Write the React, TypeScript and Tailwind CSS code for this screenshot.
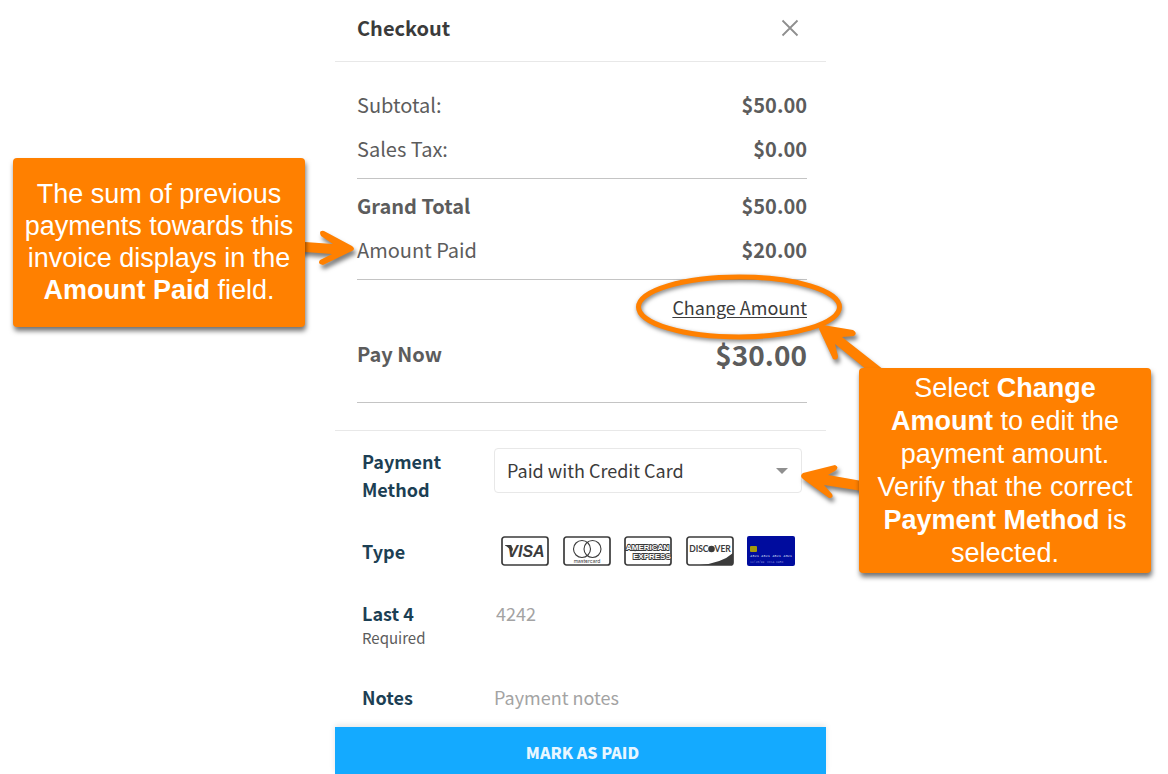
import type { ReactNode } from "react";

const totals = [
  { label: "Subtotal:", amount: "$50.00" },
  { label: "Sales Tax:", amount: "$0.00" },
];

const CardFrame = ({ children }: { children: ReactNode }) => (
  <svg viewBox="0 0 48 30" className="block h-[30px] w-12" aria-hidden="true">
    <rect x="1" y="1" width="46" height="28" rx="2.5" fill="#fff" stroke="#3b3b3b" strokeWidth="1.7" />
    {children}
  </svg>
);

const VisaIcon = () => (
  <CardFrame>
    <path d="M4 9h6l2 4-1 3C9 13 7 11 4 9.600Z" fill="#3b3b3b" />
    <text x="25" y="20.500" textAnchor="middle" fontFamily="Liberation Sans" fontSize="16" fontWeight="700" fontStyle="italic" fill="#3b3b3b">
      VISA
    </text>
  </CardFrame>
);

const MastercardIcon = () => (
  <CardFrame>
    <g fill="none" stroke="#3b3b3b" strokeWidth="1.100">
      <circle cx="19" cy="13" r="8.500" />
      <circle cx="29.500" cy="13" r="8.500" />
    </g>
    <text x="24" y="26.500" textAnchor="middle" fontFamily="Inter" fontSize="5" fill="#3b3b3b">
      mastercard
    </text>
  </CardFrame>
);

const AmexIcon = () => (
  <CardFrame>
    <g fontFamily="Liberation Sans" fontSize="8" fontWeight="700" fill="#fff" stroke="#3b3b3b" strokeWidth="1.800" paintOrder="stroke">
      <text x="2" y="14">AMERICAN</text>
      <text x="9" y="22.500">EXPRESS</text>
    </g>
  </CardFrame>
);

const DiscoverIcon = () => (
  <CardFrame>
    <path d="M14 29Q36 27 47 17V27Q47 29 45 29Z" fill="#3b3b3b" />
    <g fontFamily="Lato" fontSize="8.500" fontWeight="700" fill="#3b3b3b">
      <text x="22.500" y="16" textAnchor="end">DISC</text>
      <text x="28.500" y="16">VER</text>
    </g>
    <circle cx="25.500" cy="13" r="3.300" fill="#3b3b3b" />
  </CardFrame>
);

const OtherCardIcon = () => (
  <svg viewBox="0 0 48 30" className="block h-[30px] w-12" aria-hidden="true">
    <rect width="48" height="30" rx="2" fill="#000c9e" />
    <rect x="3" y="10" width="7" height="6" rx="1" fill="#a59a0c" />
    <g fontFamily="Liberation Mono" fill="#dfe1f7">
      <text x="3" y="21" fontSize="3.700">4321 4321 4321 4321</text>
      <text x="3" y="27" fontSize="3" fill="#7d83d3">12/20/99</text>
      <text x="20" y="27" fontSize="3" fill="#7d83d3">VISA CARD</text>
    </g>
  </svg>
);

const cardTypes = [
  { name: "Visa", icon: <VisaIcon /> },
  { name: "Mastercard", icon: <MastercardIcon /> },
  { name: "American Express", icon: <AmexIcon /> },
  { name: "Discover", icon: <DiscoverIcon /> },
  { name: "Other card", icon: <OtherCardIcon /> },
];

const TotalRow = ({ label, amount, bold = false }: { label: string; amount: string; bold?: boolean }) => (
  <div className="flex h-11 items-center justify-between pb-0.5 text-[20px]">
    <span className={bold ? "font-bold" : ""}>{label}</span>
    <span className="font-bold">{amount}</span>
  </div>
);

const Checkout = () => {
  return (
    <section className="min-w-0 font-['Noto_Sans_CJK_SC',sans-serif] text-[#5c5c5c]">
      <header className="flex h-[62px] items-center justify-between border-b border-[#e8e8e8] pb-1.5 pl-[22px] pr-[27px]">
        <h1 className="text-[20px] font-bold text-[#3b3b3b]">Checkout</h1>
        <button type="button" aria-label="Close">
          <svg viewBox="0 0 18 18" className="block h-[18px] w-[18px]" fill="none" stroke="#8f8f8f" strokeWidth="1.800">
            <path d="M1.500 1.500l15 15M16.500 1.500l-15 15" />
          </svg>
        </button>
      </header>

      <div className="pb-[27px] pl-[22px] pr-[19px] pt-[22px]">
        <div className="border-b border-[#c4c4c4] pb-1.5">
          {totals.map((item) => (
            <TotalRow key={item.label} label={item.label} amount={item.amount} />
          ))}
        </div>
        <div className="border-b border-[#c4c4c4] py-1.5">
          <TotalRow label="Grand Total" amount="$50.00" bold />
          <TotalRow label="Amount Paid" amount="$20.00" />
        </div>
        <div className="border-b border-[#c4c4c4] pb-[22px] pt-1.5">
          <div className="flex h-11 items-center justify-end pb-0.5">
            <div className="relative">
              <a href="#change" className="text-[18px] text-[#3b3b3b] underline underline-offset-2">
                Change Amount
              </a>
              <svg
                viewBox="0 0 210 70"
                className="pointer-events-none absolute left-1/2 top-1/2 h-[70px] w-[210px] -translate-x-1/2 -translate-y-1/2 overflow-visible drop-shadow-[1px_2px_2px_rgba(0,0,0,0.5)]"
                fill="none"
                stroke="#ff8000"
                strokeWidth="5"
                aria-hidden="true"
              >
                <ellipse cx="104" cy="35" rx="100.500" ry="30" />
              </svg>
            </div>
          </div>
          <div className="flex h-[50px] items-center justify-between pb-0.5 font-bold">
            <span className="text-[20px]">Pay Now</span>
            <span className="text-[28px]">$30.00</span>
          </div>
        </div>
      </div>

      <form className="border-t border-[#e8e8e8]" onSubmit={(e) => e.preventDefault()}>
        <div className="flex flex-col gap-[34px] pb-4 pl-[27px] pr-6 pt-4 text-[18px] leading-7">
          <div className="flex">
            <label htmlFor="method" className="w-[132px] shrink-0 pr-8 font-bold text-[#1c3f54]">
              Payment Method
            </label>
            <div className="relative mt-px h-[45px] flex-1">
              <select
                id="method"
                className="h-full w-full appearance-none rounded border border-[#e8e8e8] bg-white px-3 pb-0.5 text-[#3b3b3b]"
              >
                <option>Paid with Credit Card</option>
              </select>
              <svg viewBox="0 0 12 6" className="pointer-events-none absolute right-3.5 top-5 h-1.5 w-3" fill="#8f8f8f" aria-hidden="true">
                <path d="M0 0h12L6 6Z" />
              </svg>
            </div>
          </div>

          <div className="flex items-center">
            <span id="card-type" className="w-[132px] shrink-0 font-bold text-[#1c3f54]">
              Type
            </span>
            <div role="group" aria-labelledby="card-type" className="flex h-7 flex-1 items-center justify-between px-[7px]">
              {cardTypes.map((card) => (
                <button key={card.name} type="button" aria-label={card.name}>
                  {card.icon}
                </button>
              ))}
            </div>
          </div>

          <div className="flex items-start">
            <label htmlFor="last4" className="w-[132px] shrink-0">
              <span className="block font-bold text-[#1c3f54]">Last 4</span>
              <span className="block text-[15px] leading-[22px]">Required</span>
            </label>
            <input id="last4" placeholder="4242" className="h-7 min-w-0 flex-1 px-0.5 placeholder:text-[#a3a3a3]" />
          </div>

          <div className="flex items-start">
            <label htmlFor="notes" className="w-[132px] shrink-0 font-bold text-[#1c3f54]">
              Notes
            </label>
            <input id="notes" placeholder="Payment notes" className="h-7 min-w-0 flex-1 placeholder:text-[#a3a3a3]" />
          </div>
        </div>
        <button
          type="submit"
          className="block h-[47px] w-full bg-[#14aaff] pl-1 pt-0.5 text-[16px] font-black text-[#e8f6ff] shadow-[0_-2px_6px_rgba(0,0,0,0.1)]"
        >
          MARK AS PAID
        </button>
      </form>
    </section>
  );
};

const App = () => {
  return (
    <main className="grid grid-cols-[335fr_491fr_342fr] overflow-hidden bg-white">
      <div className="z-10 flex items-start justify-end pr-[30px] pt-[158px]">
        <aside className="relative w-[292px] font-['Liberation_Sans',Arial,sans-serif] text-[27px] leading-8 text-white">
          <svg
            viewBox="305 225 55 50"
            className="absolute left-full top-[67px] h-[50px] w-[55px] overflow-visible drop-shadow-[2px_4px_2px_rgba(0,0,0,0.5)]"
            fill="#ff8000"
            aria-hidden="true"
          >
            <path d="M300 242L305 242L333 244L321 236Q318 230 324 231L352 246Q356 249 352 251L323 265Q317 264 320 260L332 254L305 252H300Z" />
          </svg>
          <p className="relative flex h-[169px] flex-col justify-center rounded bg-[#ff8000] pb-0.5 text-center shadow-[1px_4px_5px_rgba(0,0,0,0.55)]">
            <span>
              The sum of previous
              <br />
              payments towards this
              <br />
              invoice displays in the
              <br />
              <b>Amount Paid</b> field.
            </span>
          </p>
        </aside>
      </div>

      <Checkout />

      <div className="z-10 flex items-start pl-[33px] pt-[368px]">
        <aside className="relative w-[292px] font-['Liberation_Sans',Arial,sans-serif] text-[27px] leading-[33px] text-white">
          <svg
            viewBox="815 320 70 50"
            className="absolute -left-11 -top-12 h-[50px] w-[70px] overflow-visible drop-shadow-[2px_4px_2px_rgba(0,0,0,0.5)]"
            fill="#ff8000"
            aria-hidden="true"
          >
            <path d="M867 370L835 344L838 356Q838 361 833 359L819 329Q818 324 823 325L853 330Q858 333 854 336L842 337L884 370Z" />
          </svg>
          <svg
            viewBox="795 460 65 45"
            className="absolute -left-16 top-[92px] h-[45px] w-[65px] overflow-visible drop-shadow-[2px_4px_2px_rgba(0,0,0,0.5)]"
            fill="#ff8000"
            aria-hidden="true"
          >
            <path d="M862 481L828 475L835 471Q840 467 835 465L803 473Q799 476 803 479L829 498Q834 498 832 494L824 485L862 491Z" />
          </svg>
          <p className="relative flex h-[205px] flex-col justify-center rounded bg-[#ff8000] text-center shadow-[1px_4px_5px_rgba(0,0,0,0.55)]">
            <span>
              Select <b>Change</b>
              <br />
              <b>Amount</b> to edit the
              <br />
              payment amount.
              <br />
              Verify that the correct
              <br />
              <b>Payment Method</b> is
              <br />
              selected.
            </span>
          </p>
        </aside>
      </div>
    </main>
  );
};

export default App;
